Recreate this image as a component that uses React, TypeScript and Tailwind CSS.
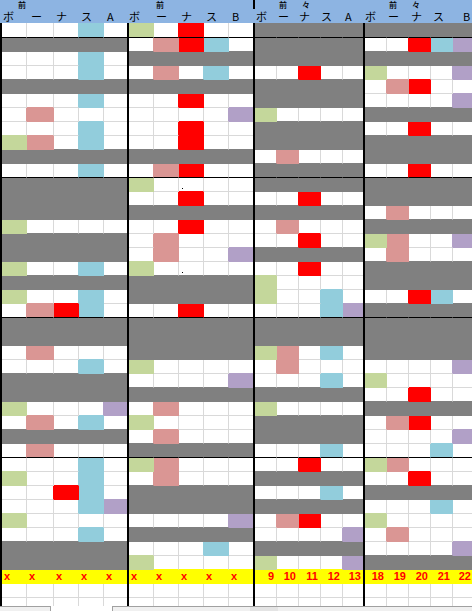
import React from 'react';

const BG: Record<string, string> = {
  W: 'bg-white',
  K: 'bg-[#808080]',
  R: 'bg-[#ff0000]',
  P: 'bg-[#da9694]',
  B: 'bg-[#92cddc]',
  G: 'bg-[#c4d79b]',
  V: 'bg-[#b1a0c7]',
  Y: 'bg-[#ffff00]',
};
const BR: Record<string, string> = {
  W: 'border-r-[#d9d9d9]',
  K: 'border-r-[#808080]',
  R: 'border-r-[#ff0000]',
  P: 'border-r-[#da9694]',
  B: 'border-r-[#92cddc]',
  G: 'border-r-[#c4d79b]',
  V: 'border-r-[#b1a0c7]',
  Y: 'border-r-[#ffff00]',
};
const BB: Record<string, string> = {
  W: 'border-b-[#d9d9d9]',
  K: 'border-b-[#808080]',
  R: 'border-b-[#ff0000]',
  P: 'border-b-[#da9694]',
  B: 'border-b-[#92cddc]',
  G: 'border-b-[#c4d79b]',
  V: 'border-b-[#b1a0c7]',
  Y: 'border-b-[#ffff00]',
};

type GroupCfg = {
  widths: string[];
  top: (string | null)[];
  topPl: string[];
  kana: string[];
  kanaPl: string[];
  rows: string[];
  foot: string[];
  footRight: boolean;
  dots?: [number, number][];
};

const GROUPS: GroupCfg[] = [
  {
    widths: ['w-[25px]', 'w-[27px]', 'w-[25px]', 'w-[25px]', 'w-[23px]'],
    top: ['前', null, null, null, null],
    topPl: ['pl-[16px]', 'pl-0', 'pl-0', 'pl-0', 'pl-0'],
    kana: ['ボ', 'ー', 'ナ', 'ス', 'A'],
    kanaPl: ['pl-[1px]', 'pl-[4px]', 'pl-[2px]', 'pl-[2px]', 'pl-[3px]'],
    rows: [
      'WWWBW', 'KKKKK', 'WWWBW', 'WWWBW', 'KKKKK', 'WWWBW', 'WPWWW', 'WWWBW', 'GPWBW', 'KKKKK',
      'WWWBW', 'KKKKK', 'KKKKK', 'KKKKK', 'GWWWW', 'KKKKK', 'KKKKK', 'GWWBW', 'KKKKK', 'GWWBW',
      'WPRBW', 'KKKKK', 'KKKKK', 'WPWWW', 'WWWBW', 'KKKKK', 'KKKKK', 'GWWWV', 'WPWBW', 'KKKKK',
      'WPWWW', 'WWWBW', 'GWWBW', 'WWRBW', 'WWWBV', 'GWWWW', 'WWWBW', 'KKKKK', 'KKKKK',
    ],
    foot: ['x', 'x', 'x', 'x', 'x'],
    footRight: false,
  },
  {
    widths: ['w-[25px]', 'w-[25px]', 'w-[25px]', 'w-[25px]', 'w-[24px]'],
    top: [null, '前', null, null, null],
    topPl: ['pl-0', 'pl-[2px]', 'pl-0', 'pl-0', 'pl-0'],
    kana: ['ボ', 'ー', 'ナ', 'ス', 'B'],
    kanaPl: ['pl-0', 'pl-[2px]', 'pl-[2px]', 'pl-[2px]', 'pl-[3px]'],
    rows: [
      'GWRWW', 'WPRBW', 'KKKKK', 'WPWBW', 'KKKKK', 'WWRWW', 'WWWWV', 'WWRWW', 'WWRWW', 'KKKKK',
      'WPRWW', 'GWWWW', 'WWRWW', 'KKKKK', 'WWRWW', 'WPWWW', 'WPWWV', 'GWWWW', 'KKKKK', 'KKKKK',
      'WWRWW', 'KKKKK', 'KKKKK', 'KKKKK', 'GWWWW', 'WWWWV', 'KKKKK', 'WPWWW', 'GWWWW', 'WPWWW',
      'KKKKK', 'GPWWW', 'WPWWW', 'KKKKK', 'KKKKK', 'WWWWV', 'KKKKK', 'WWWBW', 'GWWWW',
    ],
    foot: ['x', 'x', 'x', 'x', 'x'],
    footRight: false,
    dots: [[11, 2], [17, 2]],
  },
  {
    widths: ['w-[22px]', 'w-[22px]', 'w-[22px]', 'w-[22px]', 'w-[20px]'],
    top: [null, '前', '々', null, null],
    topPl: ['pl-0', 'pl-[2px]', 'pl-[3px]', 'pl-0', 'pl-0'],
    kana: ['ボ', 'ー', 'ナ', 'ス', 'A'],
    kanaPl: ['pl-[1px]', 'pl-[1px]', 'pl-0', 'pl-0', 'pl-[2px]'],
    rows: [
      'KKKKK', 'KKKKK', 'KKKKK', 'WWRWW', 'KKKKK', 'KKKKK', 'GWWWW', 'KKKKK', 'KKKKK', 'WPWWW',
      'KKKKK', 'KKKKK', 'WWRWW', 'KKKKK', 'WPWWW', 'WWRWW', 'KKKKK', 'WWRWW', 'GWWWW', 'GWWBW',
      'WWWBV', 'KKKKK', 'KKKKK', 'GPWBW', 'WPWWW', 'WWWBW', 'KKKKK', 'GWWWW', 'KKKKK', 'KKKKK',
      'WWWBW', 'WWRWW', 'KKKKK', 'WWWBW', 'KKKKK', 'WPRWW', 'WWWWV', 'KKKKK', 'GWWWV',
    ],
    foot: ['9', '10', '11', '12', '13'],
    footRight: true,
  },
  {
    widths: ['w-[22px]', 'w-[22px]', 'w-[22px]', 'w-[22px]', 'w-[20px]'],
    top: [null, '前', '々', null, null],
    topPl: ['pl-0', 'pl-[2px]', 'pl-[3px]', 'pl-0', 'pl-0'],
    kana: ['ボ', 'ー', 'ナ', 'ス', 'B'],
    kanaPl: ['pl-0', 'pl-[1px]', 'pl-[2px]', 'pl-[2px]', 'pl-[10px]'],
    rows: [
      'KKKKK', 'WWRBV', 'KKKKK', 'GWWWV', 'WPRWW', 'WWWWV', 'KKKKK', 'WWRWW', 'KKKKK', 'KKKKK',
      'WWRWW', 'KKKKK', 'KKKKK', 'WPWWW', 'KKKKK', 'GPWWV', 'WPWWW', 'KKKKK', 'KKKKK', 'WWRBW',
      'KKKKK', 'KKKKK', 'KKKKK', 'KKKKK', 'WWWWV', 'GWWWW', 'WWRWW', 'KKKKK', 'WPRWW', 'WWWWV',
      'WWWBW', 'GPWWW', 'WWRWW', 'KKKKK', 'WWWBW', 'GWWWW', 'WPWWW', 'WWWWV', 'KKKKK',
    ],
    foot: ['18', '19', '20', '21', '22'],
    footRight: true,
  },
];

function HeaderGroup({ cfg }: { cfg: GroupCfg }) {
  return (
    <div className="flex flex-col shrink-0">
      <div className="flex h-[11px]">
        {cfg.widths.map((w, j) => (
          <div key={j} className={`${w} ${cfg.topPl[j]} pt-[1px] shrink-0 text-[8px] leading-[8px] font-medium whitespace-nowrap`}>
            {cfg.top[j]}
          </div>
        ))}
      </div>
      <div className="flex h-[12px]">
        {cfg.widths.map((w, j) => (
          <div key={j} className={`${w} ${cfg.kanaPl[j]} shrink-0 text-[11px] leading-[11px] whitespace-nowrap`}>
            {cfg.kana[j]}
          </div>
        ))}
      </div>
    </div>
  );
}

function Group({ cfg }: { cfg: GroupCfg }) {
  const rows = cfg.rows;
  const isDot = (i: number, j: number) => (cfg.dots || []).some(([r, c]) => r === i && c === j);
  return (
    <div className="flex flex-col shrink-0">
      {rows.map((r, i) => (
        <div key={i} className={`flex shrink-0 ${i === 0 ? 'h-[15px]' : 'h-[14px]'}`}>
          {r.split('').map((c, j) => {
            const last = j === 4;
            const rightC = !last ? r[j + 1] : 'W';
            const belowC = i + 1 < rows.length ? rows[i + 1][j] : 'Y';
            const black = i % 10 === 0 && i <= 30;
            const rc = c !== 'W' ? BR[c] : rightC !== 'W' ? BR[rightC] : BR.W;
            const bc = black ? 'border-b-black' : c !== 'W' ? BB[c] : belowC !== 'W' ? BB[belowC] : BB.W;
            return (
              <div
                key={j}
                className={`${cfg.widths[j]} h-full shrink-0 border-b ${bc} ${last ? '' : `border-r ${rc}`} ${BG[c]}`}
              >
                {isDot(i, j) && <div className="ml-[3px] mt-[10px] w-px h-px bg-black" />}
              </div>
            );
          })}
        </div>
      ))}
      <div className="flex h-[14px] shrink-0">
        {cfg.widths.map((w, j) => (
          <div
            key={j}
            className={`${w} h-full shrink-0 border-b border-b-[#ffff00] ${j === 4 ? '' : 'border-r border-r-[#ffff00]'} bg-[#ffff00] flex ${
              cfg.footRight ? 'justify-end pr-[2px]' : 'justify-start pl-[2px]'
            } text-[11px] leading-[13px] font-bold text-[#ff0000] font-['Liberation_Sans',sans-serif]`}
          >
            {cfg.foot[j]}
          </div>
        ))}
      </div>
      {[0, 1].map((k) => (
        <div key={k} className="flex h-[14px] shrink-0">
          {cfg.widths.map((w, j) => (
            <div
              key={j}
              className={`${w} h-full shrink-0 border-b border-b-[#d9d9d9] ${j === 4 ? '' : 'border-r border-r-[#d9d9d9]'} bg-white`}
            />
          ))}
        </div>
      ))}
    </div>
  );
}

export default function App() {
  return (
    <div className="w-[472px] h-[611px] overflow-hidden bg-white flex flex-col font-['Noto_Sans_CJK_JP',sans-serif] text-black">
      <div className="flex h-[23px] shrink-0 bg-[#8db4e2]">
        <div className="w-[2px] shrink-0" />
        <HeaderGroup cfg={GROUPS[0]} />
        <div className="w-[2px] shrink-0" />
        <HeaderGroup cfg={GROUPS[1]} />
        <div className="w-[2px] shrink-0">
          <div className="h-[9px] bg-black" />
        </div>
        <HeaderGroup cfg={GROUPS[2]} />
        <div className="w-[2px] shrink-0" />
        <HeaderGroup cfg={GROUPS[3]} />
      </div>
      <div className="flex h-[583px] shrink-0 overflow-hidden">
        <div className="w-[2px] shrink-0 bg-black" />
        <Group cfg={GROUPS[0]} />
        <div className="w-[2px] shrink-0 bg-black" />
        <Group cfg={GROUPS[1]} />
        <div className="w-[2px] shrink-0 bg-black" />
        <Group cfg={GROUPS[2]} />
        <div className="w-[2px] shrink-0 bg-black" />
        <Group cfg={GROUPS[3]} />
      </div>
      <div className="flex h-[5px] shrink-0">
        <div className="w-[51px] shrink-0 border-t border-r border-[#a0a0a0] bg-[#f0f0f0]" />
        <div className="w-[61px] shrink-0 bg-white" />
        <div className="flex-1 border-t border-l border-[#a0a0a0] bg-[#f0f0f0] flex">
          <div className="w-[137px] shrink-0" />
          <div className="w-[28px] shrink-0 bg-[#e4e4e4]" />
        </div>
      </div>
    </div>
  );
}
